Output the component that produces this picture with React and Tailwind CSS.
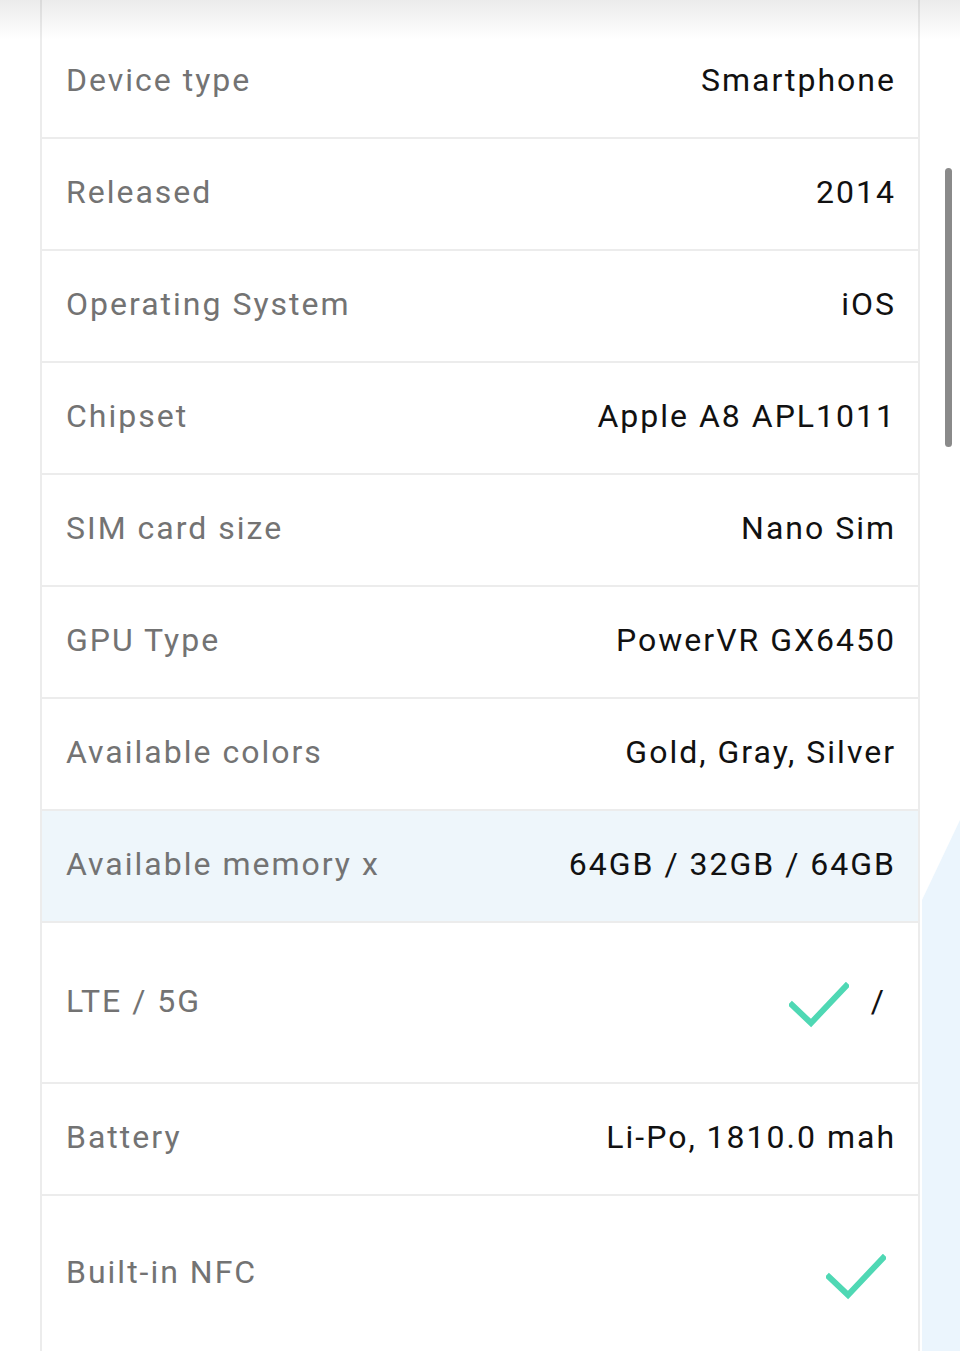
import React from "react";

const rows = [
  { label: "Device type", value: "Smartphone" },
  { label: "Released", value: "2014" },
  { label: "Operating System", value: "iOS" },
  { label: "Chipset", value: "Apple A8 APL1011" },
  { label: "SIM card size", value: "Nano Sim" },
  { label: "GPU Type", value: "PowerVR GX6450" },
  { label: "Available colors", value: "Gold, Gray, Silver" },
  { label: "Available memory x", value: "64GB / 32GB / 64GB", hl: true },
];

function Check({ className }) {
  return (
    <svg viewBox="0 0 60 46" className={className} fill="none">
      <path d="M3 23 L22 41 L57 4" stroke="#4fd8b4" strokeWidth="6" strokeLinecap="square" />
    </svg>
  );
}

const labelCls = "text-[32px] text-[#737373] tracking-[2px]";
const valueCls = "text-[32px] text-[#111111] tracking-[2px]";

export default function App() {
  return (
    <div
      className="relative w-[960px] h-[1351px] overflow-hidden bg-white"
      style={{ fontFamily: "Roboto, 'Noto Sans', sans-serif" }}
    >
      {/* decorative pale blue background at right */}
      <svg className="absolute right-0 top-[780px]" width="42" height="580" viewBox="0 0 42 580">
        <polygon points="42,40 4,120 4,580 42,580" fill="#ebf5fd" />
      </svg>
      {/* scrollbar */}
      <div className="absolute left-[945px] top-[168px] w-[7px] h-[279px] rounded-full bg-[#8a8a8a]" />

      <div className="relative ml-[40px] w-[880px] border-x-2 border-[#ececec] bg-white">
        <div className="h-[27px]" />
        {rows.map((r, i) => (
          <div
            key={i}
            className={`flex items-center justify-between h-[112px] pl-[24px] pr-[22px] pb-[4px] border-b-2 border-[#ececec] ${
              r.hl ? "bg-[#eef6fb]" : ""
            }`}
          >
            <span className={labelCls}>{r.label}</span>
            <span className={valueCls}>{r.value}</span>
          </div>
        ))}
        <div className="flex items-center justify-between h-[161px] pl-[24px] pr-[22px] pb-[4px] border-b-2 border-[#ececec]">
          <span className={labelCls}>LTE / 5G</span>
          <div className="flex items-center">
            <Check className="w-[60px] h-[46px] mt-[8px]" />
            <span className="ml-[22px] mr-[12px] text-[32px] text-[#111111]">/</span>
          </div>
        </div>
        <div className="flex items-center justify-between h-[112px] pl-[24px] pr-[22px] pb-[4px] border-b-2 border-[#ececec]">
          <span className={labelCls}>Battery</span>
          <span className={valueCls}>Li-Po, 1810.0 mah</span>
        </div>
        <div className="flex items-center justify-between h-[156px] pl-[24px] pr-[22px] pb-[4px]">
          <span className={labelCls}>Built-in NFC</span>
          <Check className="w-[60px] h-[46px] mr-[10px] mt-[10px]" />
        </div>
      </div>

      {/* top shadow */}
      <div className="absolute left-0 top-0 w-full h-[40px] bg-gradient-to-b from-[#00000014] to-transparent" />
    </div>
  );
}
